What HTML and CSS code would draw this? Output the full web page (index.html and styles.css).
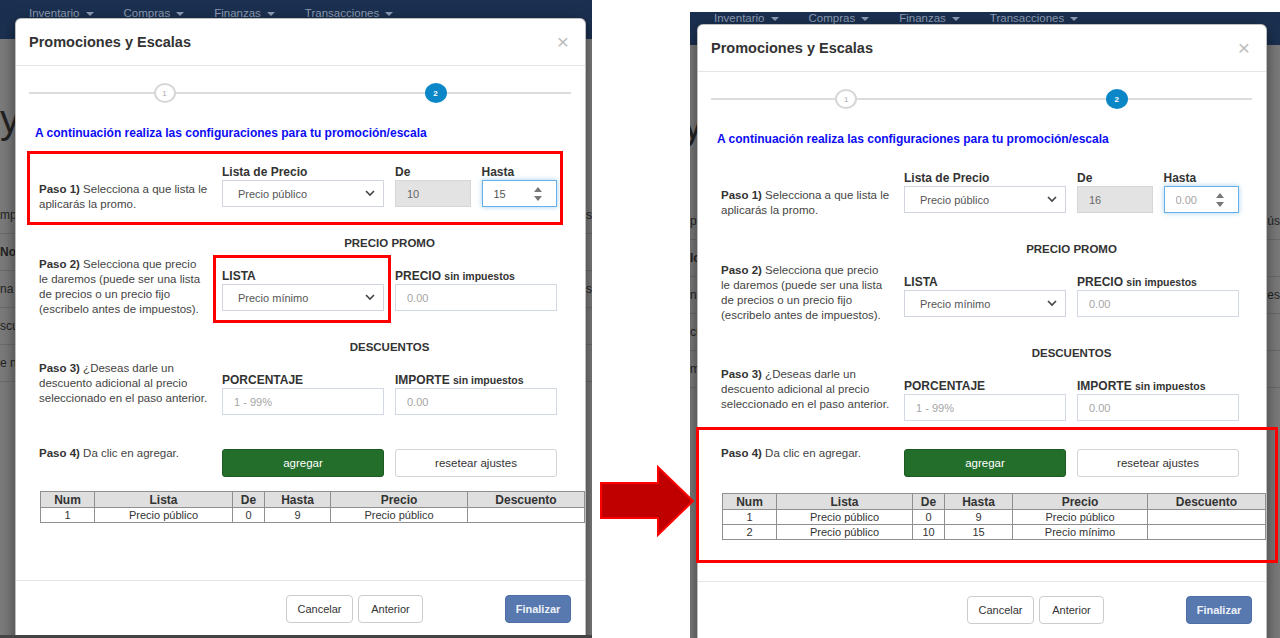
FILE: index.html
```html
<!DOCTYPE html>
<html lang="es">
<head>
    <meta charset="UTF-8">
    <meta name="viewport" content="width=device-width, initial-scale=1.0">
    <title>Promociones y Escalas</title>
    <link rel="stylesheet" href="styles.css">
</head>
<body>

<div class="sheet">

    <!-- captura 1: antes de agregar -->
    <section class="shot shot-before">
        <nav class="topnav">
            <span class="nav-item">Inventario</span>
            <span class="nav-item">Compras</span>
            <span class="nav-item">Finanzas</span>
            <span class="nav-item">Transacciones</span>
        </nav>
        <div class="page">
            <h1 class="page-title">y</h1>
            <div class="page-rows">
                <div class="page-row"><span>mpr</span><span>ús</span></div>
                <div class="page-row head"><span>No</span><span></span></div>
                <div class="page-row"><span>na</span><span>es</span></div>
                <div class="page-row"><span>scu</span><span></span></div>
                <div class="page-row"><span>e n</span><span></span></div>
            </div>
        </div>

        <div class="modal">
            <header class="modal-head">
                <h4>Promociones y Escalas</h4>
                <span class="close">×</span>
            </header>
            <div class="modal-body">
                <div class="stepper">
                    <span class="step">1</span>
                    <span class="step active">2</span>
                </div>
                <p class="intro">A continuación realiza las configuraciones para tu promoción/escala</p>

                <div class="step-row row-1">
                    <p class="hint"><b>Paso 1)</b> Selecciona a que lista le<br>aplicarás la promo.</p>
                    <div class="field">
                        <label>Lista de Precio</label>
                        <div class="select-wrap">
                            <select class="select"><option>Precio público</option></select>
                            <svg class="chevron" width="10" height="7" viewBox="0 0 10 7"><polyline points="1,1 5,5 9,1" fill="none" stroke="#444" stroke-width="1.6"/></svg>
                        </div>
                    </div>
                    <div class="field split">
                        <div>
                            <label>De</label>
                            <input class="input" value="10" disabled>
                        </div>
                        <div>
                            <label>Hasta</label>
                            <div class="input-wrap">
                                <input class="input is-focus" value="15">
                                <svg class="spinner" width="8" height="14" viewBox="0 0 8 14"><polygon points="0,5 4,0 8,5" fill="#777"/><polygon points="0,9 4,14 8,9" fill="#777"/></svg>
                            </div>
                        </div>
                    </div>
                </div>

                <h5 class="group-title">PRECIO PROMO</h5>
                <div class="step-row">
                    <p class="hint"><b>Paso 2)</b> Selecciona que precio<br>le daremos (puede ser una lista<br>de precios o un precio fijo<br>(escribelo antes de impuestos).</p>
                    <div class="field">
                        <label>LISTA</label>
                        <div class="select-wrap">
                            <select class="select"><option>Precio mínimo</option></select>
                            <svg class="chevron" width="10" height="7" viewBox="0 0 10 7"><polyline points="1,1 5,5 9,1" fill="none" stroke="#444" stroke-width="1.6"/></svg>
                        </div>
                    </div>
                    <div class="field">
                        <label>PRECIO <small>sin impuestos</small></label>
                        <input class="input" placeholder="0.00">
                    </div>
                </div>

                <h5 class="group-title">DESCUENTOS</h5>
                <div class="step-row">
                    <p class="hint"><b>Paso 3)</b> ¿Deseas darle un<br>descuento adicional al precio<br>seleccionado en el paso anterior.</p>
                    <div class="field">
                        <label>PORCENTAJE</label>
                        <input class="input" placeholder="1 - 99%">
                    </div>
                    <div class="field">
                        <label>IMPORTE <small>sin impuestos</small></label>
                        <input class="input" placeholder="0.00">
                    </div>
                </div>

                <div class="step-row row-4">
                    <p class="hint"><b>Paso 4)</b> Da clic en agregar.</p>
                    <button class="btn-add">agregar</button>
                    <button class="btn-reset">resetear ajustes</button>
                </div>

                <table class="scales">
                    <colgroup>
                        <col style="width: 54px"><col style="width: 138px"><col style="width: 32px">
                        <col style="width: 66px"><col style="width: 137px"><col>
                    </colgroup>
                    <tr><th>Num</th><th>Lista</th><th>De</th><th>Hasta</th><th>Precio</th><th>Descuento</th></tr>
                    <tr><td>1</td><td>Precio público</td><td>0</td><td>9</td><td>Precio público</td><td></td></tr>
                </table>
            </div>
            <footer class="modal-foot">
                <button class="btn btn-cancel">Cancelar</button>
                <button class="btn btn-back">Anterior</button>
                <button class="btn btn-primary">Finalizar</button>
            </footer>
        </div>

        <div class="mark mark-paso1"></div>
        <div class="mark mark-lista"></div>
    </section>

    <div class="gutter">
        <svg class="arrow" width="95" height="71" viewBox="0 0 95 71">
            <polygon points="1,17 58,17 58,1 93,35 58,69 58,52 1,52" fill="#c00000" stroke="#ff0000" stroke-width="2"/>
        </svg>
    </div>

    <!-- captura 2: despues de agregar -->
    <section class="shot shot-after">
        <nav class="topnav">
            <span class="nav-item">Inventario</span>
            <span class="nav-item">Compras</span>
            <span class="nav-item">Finanzas</span>
            <span class="nav-item">Transacciones</span>
        </nav>
        <div class="page">
            <h1 class="page-title">y</h1>
            <div class="page-rows">
                <div class="page-row"><span>pr</span><span>ús</span></div>
                <div class="page-row head"><span>lo</span><span></span></div>
                <div class="page-row"><span>na</span><span>es</span></div>
                <div class="page-row"><span>cu</span><span></span></div>
                <div class="page-row"><span>m</span><span></span></div>
            </div>
        </div>

        <div class="modal">
            <header class="modal-head">
                <h4>Promociones y Escalas</h4>
                <span class="close">×</span>
            </header>
            <div class="modal-body">
                <div class="stepper">
                    <span class="step">1</span>
                    <span class="step active">2</span>
                </div>
                <p class="intro">A continuación realiza las configuraciones para tu promoción/escala</p>

                <div class="step-row row-1">
                    <p class="hint"><b>Paso 1)</b> Selecciona a que lista le<br>aplicarás la promo.</p>
                    <div class="field">
                        <label>Lista de Precio</label>
                        <div class="select-wrap">
                            <select class="select"><option>Precio público</option></select>
                            <svg class="chevron" width="10" height="7" viewBox="0 0 10 7"><polyline points="1,1 5,5 9,1" fill="none" stroke="#444" stroke-width="1.6"/></svg>
                        </div>
                    </div>
                    <div class="field split">
                        <div>
                            <label>De</label>
                            <input class="input" value="16" disabled>
                        </div>
                        <div>
                            <label>Hasta</label>
                            <div class="input-wrap">
                                <input class="input is-focus" placeholder="0.00">
                                <svg class="spinner" width="8" height="14" viewBox="0 0 8 14"><polygon points="0,5 4,0 8,5" fill="#777"/><polygon points="0,9 4,14 8,9" fill="#777"/></svg>
                            </div>
                        </div>
                    </div>
                </div>

                <h5 class="group-title">PRECIO PROMO</h5>
                <div class="step-row">
                    <p class="hint"><b>Paso 2)</b> Selecciona que precio<br>le daremos (puede ser una lista<br>de precios o un precio fijo<br>(escribelo antes de impuestos).</p>
                    <div class="field">
                        <label>LISTA</label>
                        <div class="select-wrap">
                            <select class="select"><option>Precio mínimo</option></select>
                            <svg class="chevron" width="10" height="7" viewBox="0 0 10 7"><polyline points="1,1 5,5 9,1" fill="none" stroke="#444" stroke-width="1.6"/></svg>
                        </div>
                    </div>
                    <div class="field">
                        <label>PRECIO <small>sin impuestos</small></label>
                        <input class="input" placeholder="0.00">
                    </div>
                </div>

                <h5 class="group-title">DESCUENTOS</h5>
                <div class="step-row">
                    <p class="hint"><b>Paso 3)</b> ¿Deseas darle un<br>descuento adicional al precio<br>seleccionado en el paso anterior.</p>
                    <div class="field">
                        <label>PORCENTAJE</label>
                        <input class="input" placeholder="1 - 99%">
                    </div>
                    <div class="field">
                        <label>IMPORTE <small>sin impuestos</small></label>
                        <input class="input" placeholder="0.00">
                    </div>
                </div>

                <div class="step-row row-4">
                    <p class="hint"><b>Paso 4)</b> Da clic en agregar.</p>
                    <button class="btn-add">agregar</button>
                    <button class="btn-reset">resetear ajustes</button>
                </div>

                <table class="scales">
                    <colgroup>
                        <col style="width: 54px"><col style="width: 136px"><col style="width: 32px">
                        <col style="width: 68px"><col style="width: 135px"><col>
                    </colgroup>
                    <tr><th>Num</th><th>Lista</th><th>De</th><th>Hasta</th><th>Precio</th><th>Descuento</th></tr>
                    <tr><td>1</td><td>Precio público</td><td>0</td><td>9</td><td>Precio público</td><td></td></tr>
                    <tr><td>2</td><td>Precio público</td><td>10</td><td>15</td><td>Precio mínimo</td><td></td></tr>
                </table>
            </div>
            <footer class="modal-foot">
                <button class="btn btn-cancel">Cancelar</button>
                <button class="btn btn-back">Anterior</button>
                <button class="btn btn-primary">Finalizar</button>
            </footer>
        </div>

        <div class="mark mark-tabla"></div>
    </section>

</div>

</body>
</html>
```

FILE: styles.css
```css
* {
    box-sizing: border-box;
}

body {
    margin: 0;
    background-color: #fff;
    font-family: "Liberation Sans", Arial, sans-serif;
    color: #333;
}

.sheet {
    display: flex;
    align-items: flex-start;
    height: 638px;
    overflow: hidden;
}

/* cada captura */
.shot {
    position: relative;
    flex: none;
    overflow: hidden;
    background-color: #7b7b7b;
}

.shot-before {
    width: 592px;
    height: 638px;
    border-bottom: 3px solid #444;
}

.shot-after {
    width: 590px;
    height: 626px;
    margin-top: 12px;
}

.gutter {
    position: relative;
    z-index: 2;
    flex: none;
    width: 98px;
    padding: 466px 0 0 8px;
}

.arrow {
    display: block;
    overflow: visible;
}

/* menu superior */
.topnav {
    display: flex;
    gap: 30px;
    background-color: #1b3050;
    color: #8e9cb3;
    font-size: 11.5px;
    line-height: 15px;
}

.shot-before .topnav {
    height: 39px;
    padding: 6px 0 0 29px;
}

.shot-after .topnav {
    height: 33px;
    padding: 0 0 0 24px;
    line-height: 13px;
}

.nav-item::after {
    content: "";
    display: inline-block;
    margin-left: 6px;
    vertical-align: middle;
    border-top: 4px solid #8e9cb3;
    border-left: 4px solid transparent;
    border-right: 4px solid transparent;
}

/* pagina detras del modal */
.page {
    color: #232323;
}

.page-title {
    margin: 0;
    padding-top: 60px;
    font-size: 40px;
    line-height: 40px;
    font-weight: normal;
}

.page-rows {
    margin-top: 58px;
}

.page-row {
    display: flex;
    justify-content: space-between;
    height: 37px;
    line-height: 36px;
    font-size: 12px;
    border-bottom: 1px solid #6c6c6c;
}

.page-row.head {
    font-weight: bold;
}

.shot-after .page-title {
    margin-left: -7px;
}

/* modal */
.modal {
    position: absolute;
    width: 571px;
    background-color: #fff;
    border: 1px solid rgba(0, 0, 0, 0.25);
    border-radius: 6px;
    box-shadow: 0 5px 15px rgba(0, 0, 0, 0.5);
}

.shot-before .modal {
    left: 15px;
    top: 18px;
}

.shot-after .modal {
    left: 7px;
    top: 12px;
    width: 570px;
}

.modal-head {
    display: flex;
    justify-content: space-between;
    align-items: center;
    height: 47px;
    padding: 0 16px 0 13px;
    border-bottom: 1px solid #e5e5e5;
}

.modal-head h4 {
    margin: 0;
    font-size: 14.5px;
    color: #333;
}

.close {
    font-size: 21px;
    color: #bbb;
}

.modal-body {
    height: 514px;
    overflow: hidden;
}

.shot-after .modal-body {
    height: 509px;
}

.stepper {
    display: flex;
    justify-content: space-around;
    align-items: center;
    height: 22px;
    margin: 16px 14px 0 13px;
    background: linear-gradient(#dcdcdc, #dcdcdc) center / 100% 2px no-repeat;
}

.step {
    display: grid;
    place-items: center;
    width: 22px;
    height: 20px;
    border: 2px solid #d6d6d6;
    border-radius: 50%;
    background-color: #fff;
    font-size: 8px;
    color: #aaa;
}

.step.active {
    background-color: #0b87c7;
    border-color: #0b87c7;
    color: #fff;
    font-weight: bold;
}

.intro {
    margin: 21px 0 0 19px;
    font-size: 12px;
    line-height: 16px;
    font-weight: bold;
    color: #0c0cf4;
}

.step-row {
    display: grid;
    grid-template-columns: 172px 162px 162px;
    column-gap: 11px;
    align-items: start;
    padding-left: 23px;
}

.row-1 {
    margin-top: 24px;
}

.row-4 {
    margin-top: 31px;
}

.shot-after .row-4 {
    margin-top: 25px;
}

.hint {
    margin: 6px 0 0;
    font-size: 11.5px;
    line-height: 15px;
    color: #444;
    white-space: nowrap;
}

.hint b {
    color: #333;
}

.row-1 .hint {
    margin-top: 17px;
}

.row-4 .hint {
    margin-top: 0;
}

.field {
    margin-top: 18px;
}

.row-1 .field {
    margin-top: 0;
}

.field.split {
    display: grid;
    grid-template-columns: 1fr 1fr;
    column-gap: 11px;
}

label {
    display: block;
    font-size: 12px;
    line-height: 15px;
    font-weight: bold;
    color: #333;
    white-space: nowrap;
}

label small {
    font-size: 10.5px;
}

.group-title {
    width: 335px;
    margin: 24px 0 0 206px;
    font-size: 11.5px;
    line-height: 15px;
    text-align: center;
    color: #333;
}

.group-title + .step-row + .group-title {
    margin-top: 23px;
}

.input,
.select {
    display: block;
    width: 100%;
    height: 27px;
    margin: 0;
    padding: 0 11px;
    border: 1px solid #d3d9e4;
    border-radius: 0;
    background-color: #fff;
    font-family: inherit;
    font-size: 11px;
    color: #555;
    outline: none;
}

.input::placeholder {
    color: #a5a5a5;
}

.input:disabled {
    background-color: #e3e3e3;
    border-color: #d6d6d6;
    color: #666;
    -webkit-text-fill-color: #666;
}

.input.is-focus {
    border-color: #66afe9;
    box-shadow: 0 0 5px rgba(102, 175, 233, 0.6);
}

.select {
    appearance: none;
    -webkit-appearance: none;
    padding-left: 15px;
    border-color: #d0d5e0;
}

.select-wrap,
.input-wrap {
    position: relative;
}

.chevron {
    position: absolute;
    right: 9px;
    top: 10px;
}

.spinner {
    position: absolute;
    right: 15px;
    top: 7px;
}

.btn-add,
.btn-reset {
    height: 28px;
    margin-top: 3px;
    border-radius: 3px;
    font-family: inherit;
    font-size: 11.5px;
}

.btn-add {
    background-color: #236e2b;
    border: 1px solid #1b5a22;
    color: #fff;
}

.btn-reset {
    background-color: #fff;
    border: 1px solid #d4d4d4;
    color: #333;
}

/* tabla de escalas */
.scales {
    width: calc(100% - 24px);
    margin: 14px 0 0 24px;
    table-layout: fixed;
    border-collapse: collapse;
    font-size: 11px;
    line-height: 14px;
    text-align: center;
    color: #333;
}

.shot-after .scales {
    margin-top: 16px;
}

.scales th,
.scales td {
    padding: 0;
    border: 1px solid #8f8f8f;
    white-space: nowrap;
    overflow: hidden;
}

.scales th {
    height: 16px;
    font-size: 12px;
    background-color: #dfdfdf;
}

.scales td {
    height: 15px;
}

.modal-foot {
    display: flex;
    justify-content: flex-end;
    gap: 5px;
    height: 70px;
    padding: 14px 14px 0 0;
    border-top: 1px solid #e5e5e5;
}

.btn {
    height: 28px;
    padding: 0;
    border: 1px solid #ccc;
    border-radius: 4px;
    background-color: #fff;
    font-family: inherit;
    font-size: 11px;
    color: #333;
}

.btn-cancel {
    width: 67px;
}

.btn-back {
    width: 65px;
}

.btn-primary {
    width: 66px;
    margin-left: 77px;
    background-color: #5878b0;
    border-color: #4e6ea6;
    color: #eef2f8;
    font-weight: bold;
}

/* recuadros rojos de la anotacion */
.mark {
    position: absolute;
    border: 3px solid #ff0000;
}

.mark-paso1 {
    left: 27px;
    top: 151px;
    width: 536px;
    height: 74px;
}

.mark-lista {
    left: 213px;
    top: 255px;
    width: 178px;
    height: 68px;
}

.mark-tabla {
    left: 6px;
    top: 415px;
    width: 582px;
    height: 136px;
}
```
